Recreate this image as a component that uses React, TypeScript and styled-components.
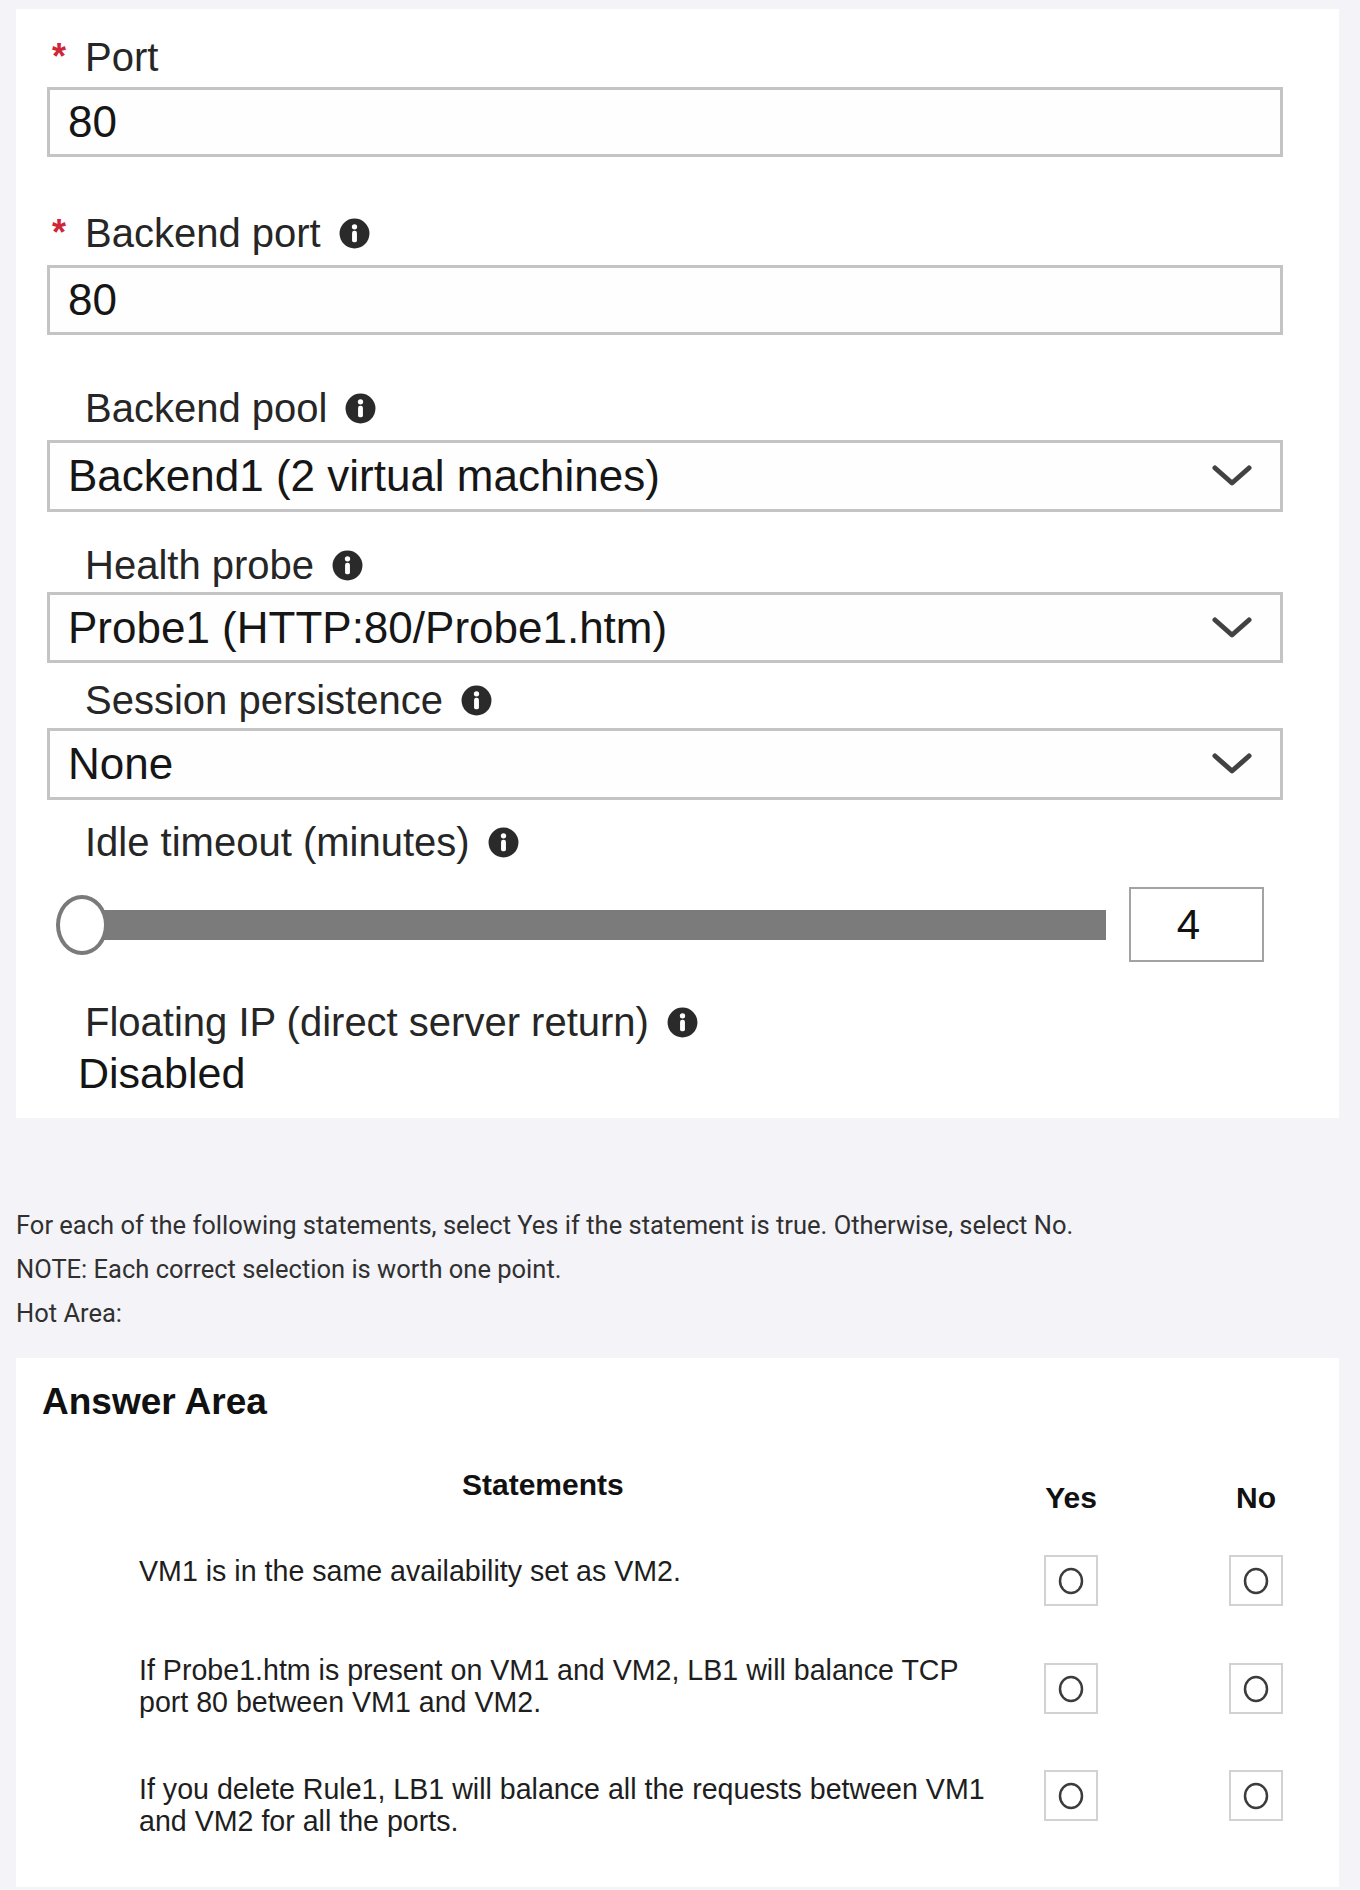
import React from "react";
import styled, { createGlobalStyle } from "styled-components";

const GlobalStyle = createGlobalStyle`
  html, body {
    margin: 0;
    padding: 0;
    background: #f3f3f8;
  }
  * { box-sizing: border-box; }
`;

const Page = styled.div`
  padding: 9px 21px 3px 16px;
  font-family: "Liberation Sans", Arial, sans-serif;
`;

const FormPanel = styled.section`
  background: #ffffff;
  padding: 28px 56px 23px 31px;
  display: flex;
  flex-direction: column;
`;

const Field = styled.div<{ $top: number }>`
  margin-top: ${(p) => p.$top}px;
  display: flex;
  flex-direction: column;
`;

const LabelRow = styled.div<{ $gap: number }>`
  display: flex;
  align-items: center;
  height: 40px;
  padding-left: 5px;
  margin-bottom: ${(p) => p.$gap}px;
`;

const Marker = styled.span`
  width: 33px;
  font-size: 36px;
  line-height: 40px;
  font-weight: 700;
  color: #d0263a;
`;

const LabelText = styled.span`
  font-size: 40px;
  line-height: 40px;
  color: #262626;
  margin-right: 18px;
  white-space: nowrap;
`;

const Box = styled.div<{ $h: number }>`
  height: ${(p) => p.$h}px;
  border: 3px solid #c4c4c4;
  background: #fefefe;
  display: flex;
  align-items: center;
  justify-content: space-between;
  padding: 0 28px 0 18px;
`;

const Value = styled.span`
  font-size: 44px;
  line-height: 50px;
  color: #161616;
  white-space: nowrap;
`;

const SliderRow = styled.div`
  display: flex;
  align-items: center;
  margin-left: 9px;
`;

const SliderTrackArea = styled.div`
  position: relative;
  width: 1050px;
  height: 60px;
  display: flex;
  align-items: center;
`;

const Track = styled.div`
  margin-left: 26px;
  flex: 1;
  height: 30px;
  background: #7b7b7b;
`;

const Thumb = styled.div`
  position: absolute;
  left: 0;
  top: 0;
  width: 52px;
  height: 60px;
  border-radius: 50%;
  border: 4px solid #7a7a7a;
  background: #ffffff;
`;

const NumberBox = styled.div`
  margin-left: 23px;
  width: 135px;
  height: 75px;
  border: 2px solid #a3a3a3;
  display: flex;
  align-items: center;
  justify-content: center;
  font-size: 42px;
  color: #111;
  padding-right: 16px;
`;

const StaticValue = styled.div`
  font-size: 43px;
  line-height: 43px;
  color: #151515;
  padding-left: 31px;
`;

const Instructions = styled.div`
  margin-top: 85px;
  font-family: Roboto, "Liberation Sans", sans-serif;
  font-size: 25.5px;
  line-height: 44px;
  color: #303030;
`;

const Line = styled.p`
  margin: 0;
`;

const AnswerPanel = styled.section`
  margin-top: 23px;
  background: #ffffff;
  padding: 24px 21px 50px 26px;
`;

const AnswerTitle = styled.h2`
  margin: 0;
  font-size: 37px;
  line-height: 40px;
  font-weight: 700;
  color: #111;
`;

const Table = styled.div`
  margin-left: 97px;
  margin-top: 46px;
  display: flex;
  flex-direction: column;
`;

const TableRow = styled.div<{ $top?: number }>`
  display: grid;
  grid-template-columns: 880px 289px;
  align-items: start;
  margin-top: ${(p) => p.$top ?? 0}px;
`;

const StatementsHead = styled.div`
  padding-left: 323px;
  font-size: 30px;
  line-height: 34px;
  font-weight: 700;
  color: #111;
`;

const Choices = styled.div<{ $offset?: number }>`
  display: flex;
  justify-content: space-between;
  margin-top: ${(p) => p.$offset ?? 0}px;
`;

const ChoiceHead = styled.div`
  width: 104px;
  margin-top: 13px;
  text-align: center;
  font-size: 30px;
  line-height: 34px;
  font-weight: 700;
  color: #111;
`;

const ChoiceCell = styled.div`
  width: 104px;
  display: flex;
  justify-content: center;
`;

const RadioBox = styled.div`
  width: 54px;
  height: 51px;
  border: 2px solid #d2d2d2;
  display: flex;
  align-items: center;
  justify-content: center;
`;

const Statement = styled.div<{ $offset: number }>`
  margin-top: ${(p) => p.$offset}px;
  font-size: 28.6px;
  line-height: 32px;
  color: #1e1e1e;
  white-space: nowrap;
`;

const InfoIcon = () => (
  <svg width="31" height="31" viewBox="0 0 28 28" aria-hidden="true">
    <circle cx="14" cy="14" r="13.5" fill="#2a2a2a" />
    <circle cx="14" cy="8" r="2.4" fill="#ffffff" />
    <rect x="11.8" y="11.5" width="4.4" height="10.5" rx="2" fill="#ffffff" />
  </svg>
);

const Chevron = () => (
  <svg width="40" height="22" viewBox="0 0 40 22" aria-hidden="true">
    <polyline
      points="3,3 20,18 37,3"
      fill="none"
      stroke="#424242"
      strokeWidth="5"
      strokeLinecap="round"
      strokeLinejoin="round"
    />
  </svg>
);

const RadioMark = () => (
  <svg width="28" height="30" viewBox="0 0 28 30" aria-hidden="true">
    <ellipse cx="14" cy="15" rx="11" ry="12" fill="none" stroke="#3c3c3c" strokeWidth="2.5" />
  </svg>
);

type LabelProps = { text: string; required?: boolean; info?: boolean; gap: number };

const Label = ({ text, required, info, gap }: LabelProps) => (
  <LabelRow $gap={gap}>
    <Marker>{required ? "*" : ""}</Marker>
    <LabelText>{text}</LabelText>
    {info && <InfoIcon />}
  </LabelRow>
);

type StatementRow = { text: React.ReactNode; top: number; textOffset: number; boxOffset: number };

const statements: StatementRow[] = [
  { text: "VM1 is in the same availability set as VM2.", top: 0, textOffset: 0, boxOffset: 0 },
  {
    text: (
      <>
        If Probe1.htm is present on VM1 and VM2, LB1 will balance TCP
        <br />
        port 80 between VM1 and VM2.
      </>
    ),
    top: 48,
    textOffset: 0,
    boxOffset: 9,
  },
  {
    text: (
      <>
        If you delete Rule1, LB1 will balance all the requests between VM1
        <br />
        and VM2 for all the ports.
      </>
    ),
    top: 52,
    textOffset: 3,
    boxOffset: 0,
  },
];

export default function App() {
  return (
    <Page>
      <GlobalStyle />
      <FormPanel>
        <Field $top={0}>
          <Label text="Port" required gap={10} />
          <Box $h={70}>
            <Value>80</Value>
          </Box>
        </Field>
        <Field $top={56}>
          <Label text="Backend port" required info gap={12} />
          <Box $h={70}>
            <Value>80</Value>
          </Box>
        </Field>
        <Field $top={53}>
          <Label text="Backend pool" info gap={12} />
          <Box $h={72}>
            <Value>Backend1 (2 virtual machines)</Value>
            <Chevron />
          </Box>
        </Field>
        <Field $top={33}>
          <Label text="Health probe" info gap={7} />
          <Box $h={71}>
            <Value>Probe1 (HTTP:80/Probe1.htm)</Value>
            <Chevron />
          </Box>
        </Field>
        <Field $top={17}>
          <Label text="Session persistence" info gap={8} />
          <Box $h={72}>
            <Value>None</Value>
            <Chevron />
          </Box>
        </Field>
        <Field $top={22}>
          <Label text="Idle timeout (minutes)" info gap={25} />
          <SliderRow>
            <SliderTrackArea>
              <Track />
              <Thumb />
            </SliderTrackArea>
            <NumberBox>4</NumberBox>
          </SliderRow>
        </Field>
        <Field $top={40}>
          <Label text="Floating IP (direct server return)" info gap={10} />
          <StaticValue>Disabled</StaticValue>
        </Field>
      </FormPanel>

      <Instructions>
        <Line>For each of the following statements, select Yes if the statement is true. Otherwise, select No.</Line>
        <Line>NOTE: Each correct selection is worth one point.</Line>
        <Line>Hot Area:</Line>
      </Instructions>

      <AnswerPanel>
        <AnswerTitle>Answer Area</AnswerTitle>
        <Table>
          <TableRow>
            <StatementsHead>Statements</StatementsHead>
            <Choices>
              <ChoiceHead>Yes</ChoiceHead>
              <ChoiceHead>No</ChoiceHead>
            </Choices>
          </TableRow>
          {statements.map((s, i) => (
            <TableRow key={i} $top={i === 0 ? 40 : s.top}>
              <Statement $offset={s.textOffset}>{s.text}</Statement>
              <Choices $offset={s.boxOffset}>
                <ChoiceCell>
                  <RadioBox>
                    <RadioMark />
                  </RadioBox>
                </ChoiceCell>
                <ChoiceCell>
                  <RadioBox>
                    <RadioMark />
                  </RadioBox>
                </ChoiceCell>
              </Choices>
            </TableRow>
          ))}
        </Table>
      </AnswerPanel>
    </Page>
  );
}
